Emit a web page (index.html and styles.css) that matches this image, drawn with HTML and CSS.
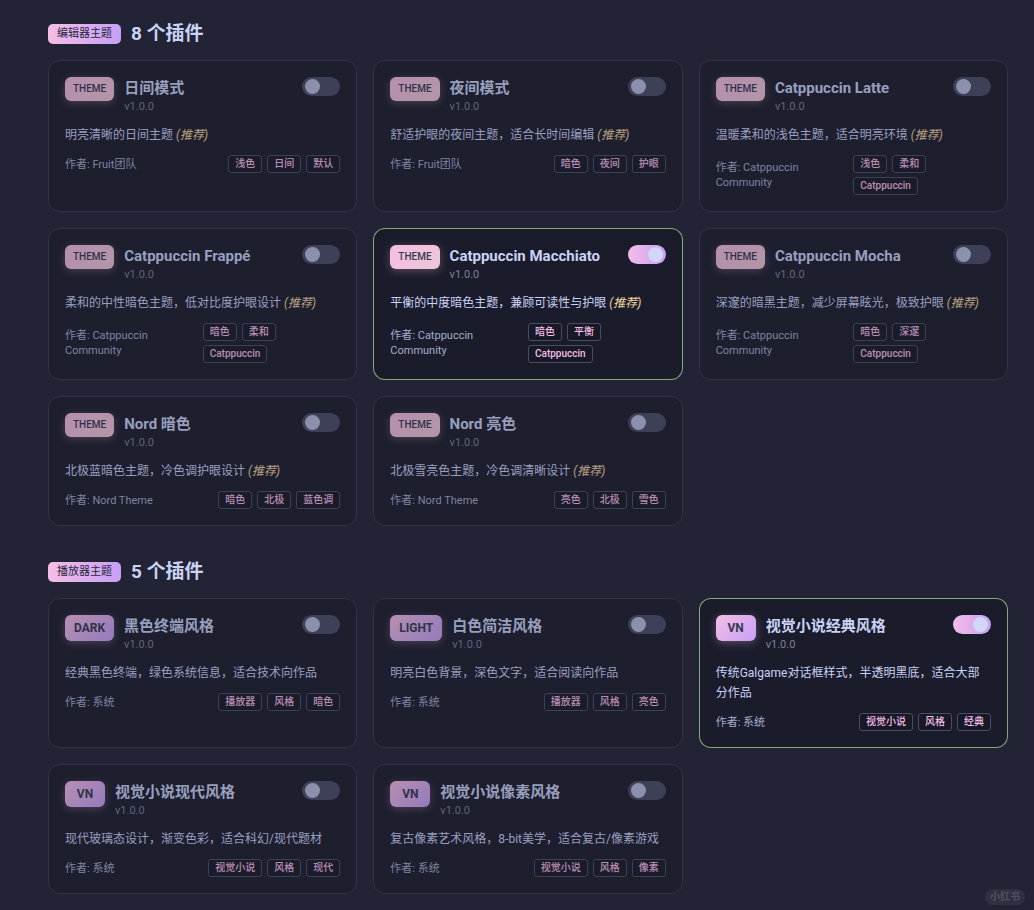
FILE: index.html
```html
<!DOCTYPE html>
<html lang="zh-CN">
<head>
  <meta charset="UTF-8">
  <title>插件主题</title>
  <link rel="stylesheet" href="styles.css">
</head>
<body>
  <div class="page">

    <section class="group">
      <div class="group-head">
        <span class="group-tag">编辑器主题</span>
        <h2>8 个插件</h2>
      </div>
      <div class="grid">
        <div class="card">
          <div class="card-head">
            <span class="badge badge-theme">THEME</span>
            <div class="card-info"><h3>日间模式</h3><span class="ver">v1.0.0</span></div>
            <span class="switch"></span>
          </div>
          <p class="desc">明亮清晰的日间主题 <em>(推荐)</em></p>
          <div class="card-foot">
            <span class="author">作者: Fruit团队</span>
            <div class="tags"><span>浅色</span><span>日间</span><span>默认</span></div>
          </div>
        </div>

        <div class="card">
          <div class="card-head">
            <span class="badge badge-theme">THEME</span>
            <div class="card-info"><h3>夜间模式</h3><span class="ver">v1.0.0</span></div>
            <span class="switch"></span>
          </div>
          <p class="desc">舒适护眼的夜间主题，适合长时间编辑 <em>(推荐)</em></p>
          <div class="card-foot">
            <span class="author">作者: Fruit团队</span>
            <div class="tags"><span>暗色</span><span>夜间</span><span>护眼</span></div>
          </div>
        </div>

        <div class="card">
          <div class="card-head">
            <span class="badge badge-theme">THEME</span>
            <div class="card-info"><h3>Catppuccin Latte</h3><span class="ver">v1.0.0</span></div>
            <span class="switch"></span>
          </div>
          <p class="desc">温暖柔和的浅色主题，适合明亮环境 <em>(推荐)</em></p>
          <div class="card-foot">
            <span class="author">作者: Catppuccin Community</span>
            <div class="tags"><span>浅色</span><span>柔和</span><span>Catppuccin</span></div>
          </div>
        </div>

        <div class="card">
          <div class="card-head">
            <span class="badge badge-theme">THEME</span>
            <div class="card-info"><h3>Catppuccin Frappé</h3><span class="ver">v1.0.0</span></div>
            <span class="switch"></span>
          </div>
          <p class="desc">柔和的中性暗色主题，低对比度护眼设计 <em>(推荐)</em></p>
          <div class="card-foot">
            <span class="author">作者: Catppuccin Community</span>
            <div class="tags"><span>暗色</span><span>柔和</span><span>Catppuccin</span></div>
          </div>
        </div>

        <div class="card card-on">
          <div class="card-head">
            <span class="badge badge-theme">THEME</span>
            <div class="card-info"><h3>Catppuccin Macchiato</h3><span class="ver">v1.0.0</span></div>
            <span class="switch switch-on"></span>
          </div>
          <p class="desc">平衡的中度暗色主题，兼顾可读性与护眼 <em>(推荐)</em></p>
          <div class="card-foot">
            <span class="author">作者: Catppuccin Community</span>
            <div class="tags"><span>暗色</span><span>平衡</span><span>Catppuccin</span></div>
          </div>
        </div>

        <div class="card">
          <div class="card-head">
            <span class="badge badge-theme">THEME</span>
            <div class="card-info"><h3>Catppuccin Mocha</h3><span class="ver">v1.0.0</span></div>
            <span class="switch"></span>
          </div>
          <p class="desc">深邃的暗黑主题，减少屏幕眩光，极致护眼 <em>(推荐)</em></p>
          <div class="card-foot">
            <span class="author">作者: Catppuccin Community</span>
            <div class="tags"><span>暗色</span><span>深邃</span><span>Catppuccin</span></div>
          </div>
        </div>

        <div class="card">
          <div class="card-head">
            <span class="badge badge-theme">THEME</span>
            <div class="card-info"><h3>Nord 暗色</h3><span class="ver">v1.0.0</span></div>
            <span class="switch"></span>
          </div>
          <p class="desc">北极蓝暗色主题，冷色调护眼设计 <em>(推荐)</em></p>
          <div class="card-foot">
            <span class="author">作者: Nord Theme</span>
            <div class="tags"><span>暗色</span><span>北极</span><span>蓝色调</span></div>
          </div>
        </div>

        <div class="card">
          <div class="card-head">
            <span class="badge badge-theme">THEME</span>
            <div class="card-info"><h3>Nord 亮色</h3><span class="ver">v1.0.0</span></div>
            <span class="switch"></span>
          </div>
          <p class="desc">北极雪亮色主题，冷色调清晰设计 <em>(推荐)</em></p>
          <div class="card-foot">
            <span class="author">作者: Nord Theme</span>
            <div class="tags"><span>亮色</span><span>北极</span><span>雪色</span></div>
          </div>
        </div>
      </div>
    </section>

    <section class="group">
      <div class="group-head">
        <span class="group-tag">播放器主题</span>
        <h2>5 个插件</h2>
      </div>
      <div class="grid">
        <div class="card">
          <div class="card-head">
            <span class="badge">DARK</span>
            <div class="card-info"><h3>黑色终端风格</h3><span class="ver">v1.0.0</span></div>
            <span class="switch"></span>
          </div>
          <p class="desc">经典黑色终端，绿色系统信息，适合技术向作品</p>
          <div class="card-foot">
            <span class="author">作者: 系统</span>
            <div class="tags"><span>播放器</span><span>风格</span><span>暗色</span></div>
          </div>
        </div>

        <div class="card">
          <div class="card-head">
            <span class="badge">LIGHT</span>
            <div class="card-info"><h3>白色简洁风格</h3><span class="ver">v1.0.0</span></div>
            <span class="switch"></span>
          </div>
          <p class="desc">明亮白色背景，深色文字，适合阅读向作品</p>
          <div class="card-foot">
            <span class="author">作者: 系统</span>
            <div class="tags"><span>播放器</span><span>风格</span><span>亮色</span></div>
          </div>
        </div>

        <div class="card card-on">
          <div class="card-head">
            <span class="badge">VN</span>
            <div class="card-info"><h3>视觉小说经典风格</h3><span class="ver">v1.0.0</span></div>
            <span class="switch switch-on"></span>
          </div>
          <p class="desc">传统Galgame对话框样式，半透明黑底，适合大部分作品</p>
          <div class="card-foot">
            <span class="author">作者: 系统</span>
            <div class="tags"><span>视觉小说</span><span>风格</span><span>经典</span></div>
          </div>
        </div>

        <div class="card">
          <div class="card-head">
            <span class="badge">VN</span>
            <div class="card-info"><h3>视觉小说现代风格</h3><span class="ver">v1.0.0</span></div>
            <span class="switch"></span>
          </div>
          <p class="desc">现代玻璃态设计，渐变色彩，适合科幻/现代题材</p>
          <div class="card-foot">
            <span class="author">作者: 系统</span>
            <div class="tags"><span>视觉小说</span><span>风格</span><span>现代</span></div>
          </div>
        </div>

        <div class="card">
          <div class="card-head">
            <span class="badge">VN</span>
            <div class="card-info"><h3>视觉小说像素风格</h3><span class="ver">v1.0.0</span></div>
            <span class="switch"></span>
          </div>
          <p class="desc">复古像素艺术风格，8-bit美学，适合复古/像素游戏</p>
          <div class="card-foot">
            <span class="author">作者: 系统</span>
            <div class="tags"><span>视觉小说</span><span>风格</span><span>像素</span></div>
          </div>
        </div>
      </div>
    </section>

  </div>

  <span class="watermark">小红书</span>
</body>
</html>
```

FILE: styles.css
```css
* {
  box-sizing: border-box;
}
body {
  margin: 0;
  min-height: 100vh;
  background: #222436;
  font-family: Roboto, "Noto Sans CJK SC", sans-serif;
  color: #cad3f5;
  position: relative;
}
.page {
  width: 1008px;
  padding: 22px 0 20px 48px;
}
.group {
  margin-bottom: 34px;
}
.group:last-child {
  margin-bottom: 0;
}
.group-head {
  display: flex;
  align-items: center;
  gap: 10px;
  height: 24px;
  margin-bottom: 14px;
}
.group-tag {
  background: linear-gradient(90deg, #f5bde6, #c6a0f6);
  color: #24273a;
  font-size: 11px;
  line-height: 20px;
  padding: 0 9px;
  border-radius: 5px;
}
.group-head h2 {
  margin: 0;
  font-size: 19px;
  font-weight: 700;
  line-height: 24px;
  color: #cad3f5;
}
.grid {
  display: grid;
  grid-template-columns: repeat(3, 1fr);
  gap: 16px;
}
.card {
  background: #1b1c2b;
  border: 1px solid #363a4f;
  border-radius: 12px;
  padding: 16px;
  opacity: 0.7;
}
.card-on {
  opacity: 1;
  border-color: rgba(166, 218, 149, 0.75);
}
.card-head {
  display: flex;
  align-items: flex-start;
  gap: 10px;
}
.badge {
  flex-shrink: 0;
  min-width: 40px;
  text-align: center;
  padding: 5px 9px;
  border-radius: 6px;
  background: linear-gradient(135deg, #f5bde6, #c6a0f6);
  color: #363a4f;
  font-size: 12px;
  font-weight: 700;
  line-height: 16px;
  box-shadow: 0 2px 8px rgba(245, 189, 230, 0.3);
}
.badge-theme {
  background: linear-gradient(135deg, #f5bde6, #f0c6d6);
  font-size: 10px;
  font-weight: 500;
  line-height: 14px;
  padding: 5px 8px;
}
.card-info {
  flex: 1;
  min-width: 0;
  display: flex;
  flex-direction: column;
}
.card-info h3 {
  margin: 0;
  font-size: 15px;
  font-weight: 700;
  line-height: 22px;
  color: #cad3f5;
  white-space: nowrap;
}
.ver {
  font-size: 11px;
  line-height: 16px;
  color: #7c809a;
}
.switch {
  flex-shrink: 0;
  width: 38px;
  height: 19px;
  border-radius: 10px;
  background: #494d64;
  position: relative;
}
.switch::after {
  content: "";
  position: absolute;
  top: 2px;
  left: 3px;
  width: 15px;
  height: 15px;
  border-radius: 50%;
  background: #b8c0e0;
}
.switch-on {
  background: linear-gradient(90deg, #f5bde6, #c6a0f6);
}
.switch-on::after {
  left: 20px;
  background: #d2d6f7;
}
.desc {
  margin: 10px 0 0;
  font-size: 12px;
  line-height: 20px;
  color: #cad3f5;
}
.desc em {
  color: #eed49f;
  font-style: italic;
}
.card-foot {
  display: flex;
  align-items: center;
  justify-content: space-between;
  gap: 8px;
  margin-top: 10px;
}
.author {
  flex: 1;
  min-width: 0;
  font-size: 11px;
  line-height: 15px;
  color: #a5adcb;
}
.tags {
  max-width: 50%;
  display: flex;
  flex-wrap: wrap;
  gap: 4px 5px;
}
.tags span {
  border: 1px solid #494d64;
  border-radius: 3px;
  padding: 1px 6px;
  font-size: 10px;
  font-weight: 500;
  line-height: 14px;
  color: #f5bde6;
  background: #181926;
  white-space: nowrap;
}
.watermark {
  position: absolute;
  right: 9px;
  bottom: 9px;
  padding: 1px 5px;
  border-radius: 8px;
  background: rgba(255, 255, 255, 0.06);
  color: rgba(255, 255, 255, 0.18);
  font-size: 10px;
  font-weight: 700;
  line-height: 14px;
}
```
